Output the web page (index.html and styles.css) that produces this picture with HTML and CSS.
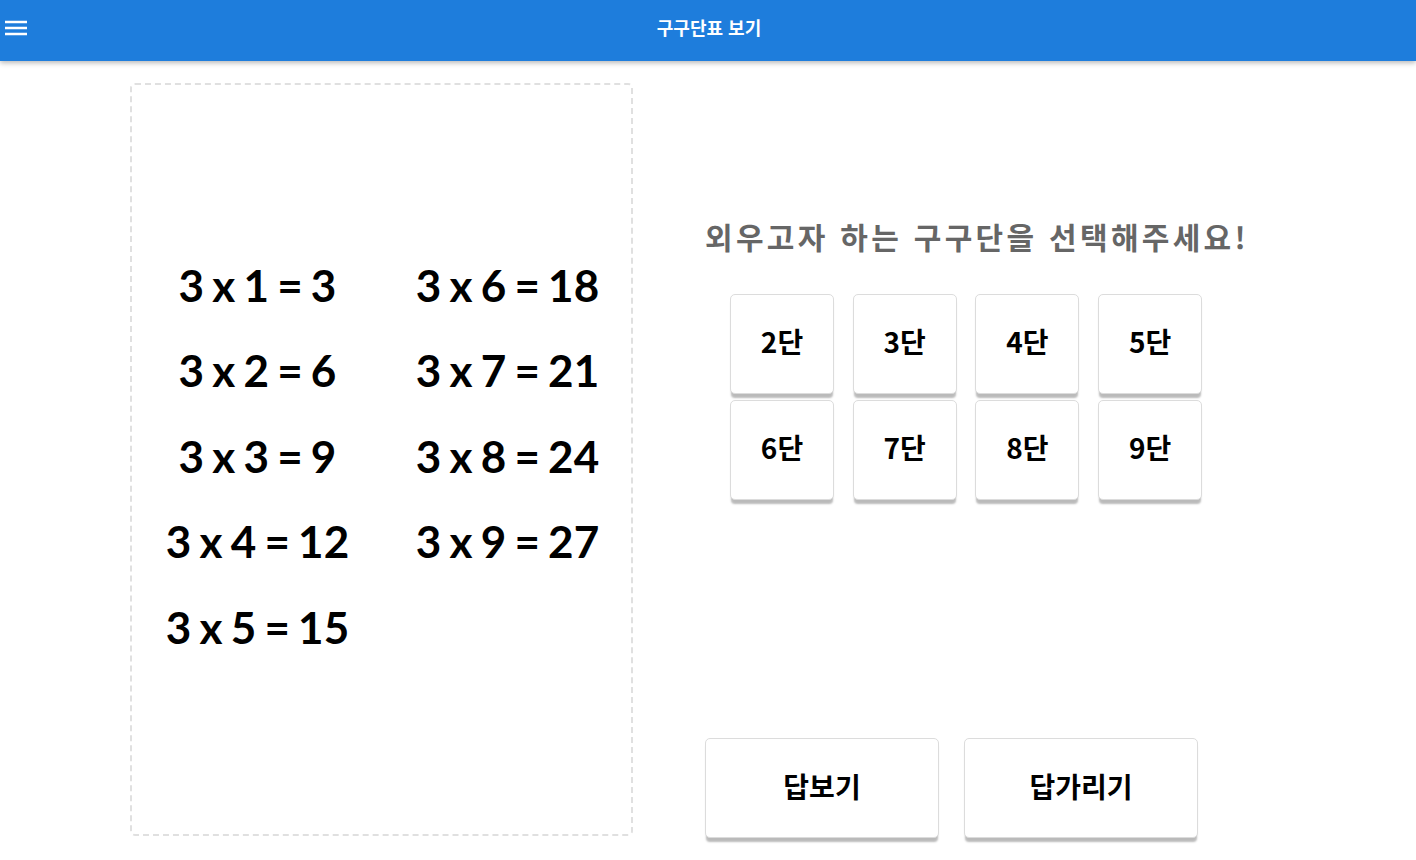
FILE: index.html
```html
<!DOCTYPE html>
<html lang="ko">
<head>
<meta charset="utf-8">
<title>구구단표 보기</title>
<link rel="stylesheet" href="styles.css">
</head>
<body>
<header class="appbar">
  <button class="menu-btn" aria-label="menu">
    <svg width="24" height="24" viewBox="0 0 24 24"><path d="M1 5h22M1 11h22M1 17h22" stroke="#fff" stroke-width="2.4" fill="none"/></svg>
  </button>
  <h1 class="title">구구단표 보기</h1>
</header>
<main class="main">
  <section class="table-card">
    <div class="eq-grid">
      <div class="eq">3 x 1 = 3</div>
      <div class="eq">3 x 6 = 18</div>
      <div class="eq">3 x 2 = 6</div>
      <div class="eq">3 x 7 = 21</div>
      <div class="eq">3 x 3 = 9</div>
      <div class="eq">3 x 8 = 24</div>
      <div class="eq">3 x 4 = 12</div>
      <div class="eq">3 x 9 = 27</div>
      <div class="eq">3 x 5 = 15</div>
    </div>
  </section>
  <section class="side">
    <h2 class="prompt">외우고자 하는 구구단을 선택해주세요!</h2>
    <div class="dan-grid">
      <button class="dan">2단</button>
      <button class="dan">3단</button>
      <button class="dan">4단</button>
      <button class="dan">5단</button>
      <button class="dan">6단</button>
      <button class="dan">7단</button>
      <button class="dan">8단</button>
      <button class="dan">9단</button>
    </div>
    <div class="actions">
      <button class="action">답보기</button>
      <button class="action">답가리기</button>
    </div>
  </section>
</main>
</body>
</html>
```
FILE: styles.css
```css
* { box-sizing: border-box; }
html, body { margin: 0; padding: 0; background: #fff; }
body {
  font-family: "Noto Sans CJK KR", "Noto Sans", sans-serif;
  width: 1416px;
  height: 860px;
  overflow: hidden;
}
.appbar {
  height: 61px;
  background: #1e7ddc;
  display: flex;
  align-items: center;
  justify-content: center;
  position: relative;
  box-shadow: 0 2px 5px rgba(0,0,0,0.28);
  z-index: 2;
}
.menu-btn {
  position: absolute;
  left: 4px;
  top: 17px;
  background: none;
  border: 0;
  padding: 0;
  width: 24px;
  height: 24px;
  display: flex;
}
.title {
  margin: 0;
  color: #fff;
  font-size: 18px;
  font-weight: 700;
  transform: translate(1px, -4px);
}
.main {
  display: flex;
  padding: 22px 0 0 130px;
  gap: 72px;
}
.table-card {
  width: 503px;
  height: 753px;
  border: 2px dashed #e0e0e0;
  border-radius: 5px;
  display: flex;
  align-items: center;
  justify-content: center;
  padding-bottom: 8px;
}
.eq-grid {
  display: grid;
  grid-template-columns: 250px 250px;
  row-gap: 33.5px;
  transform: translateX(1px);
}
.eq {
  font-family: "Lato", "Noto Sans", sans-serif;
  font-weight: 700;
  font-size: 44px;
  line-height: 52px;
  word-spacing: -2.5px;
  text-align: center;
  color: #000;
}
.side {
  display: flex;
  flex-direction: column;
  width: 580px;
}
.prompt {
  margin: 135px 0 0 0;
  font-size: 30px;
  font-weight: 700;
  color: #666;
  line-height: 36px;
  letter-spacing: 3.3px;
  white-space: nowrap;
}
.dan-grid {
  margin: 40px 0 0 25px;
  display: grid;
  grid-template-columns: repeat(4, 104px);
  column-gap: 18.7px;
  row-gap: 6px;
}
.dan, .action {
  background: #fff;
  border: 1px solid #dcdcdc;
  border-radius: 5px;
  box-shadow: 0 5px 2px -1px rgba(0,0,0,0.27);
  font-family: "Noto Sans CJK KR", sans-serif;
  font-weight: 700;
  color: #000;
  cursor: pointer;
  padding: 0;
}
.dan {
  height: 100px;
  font-size: 28px;
  padding-bottom: 7px;
}
.actions {
  margin: 238px 0 0 0;
  display: flex;
  gap: 25px;
}
.action {
  width: 234px;
  height: 100px;
  font-size: 28px;
  padding-bottom: 4px;
}
```
